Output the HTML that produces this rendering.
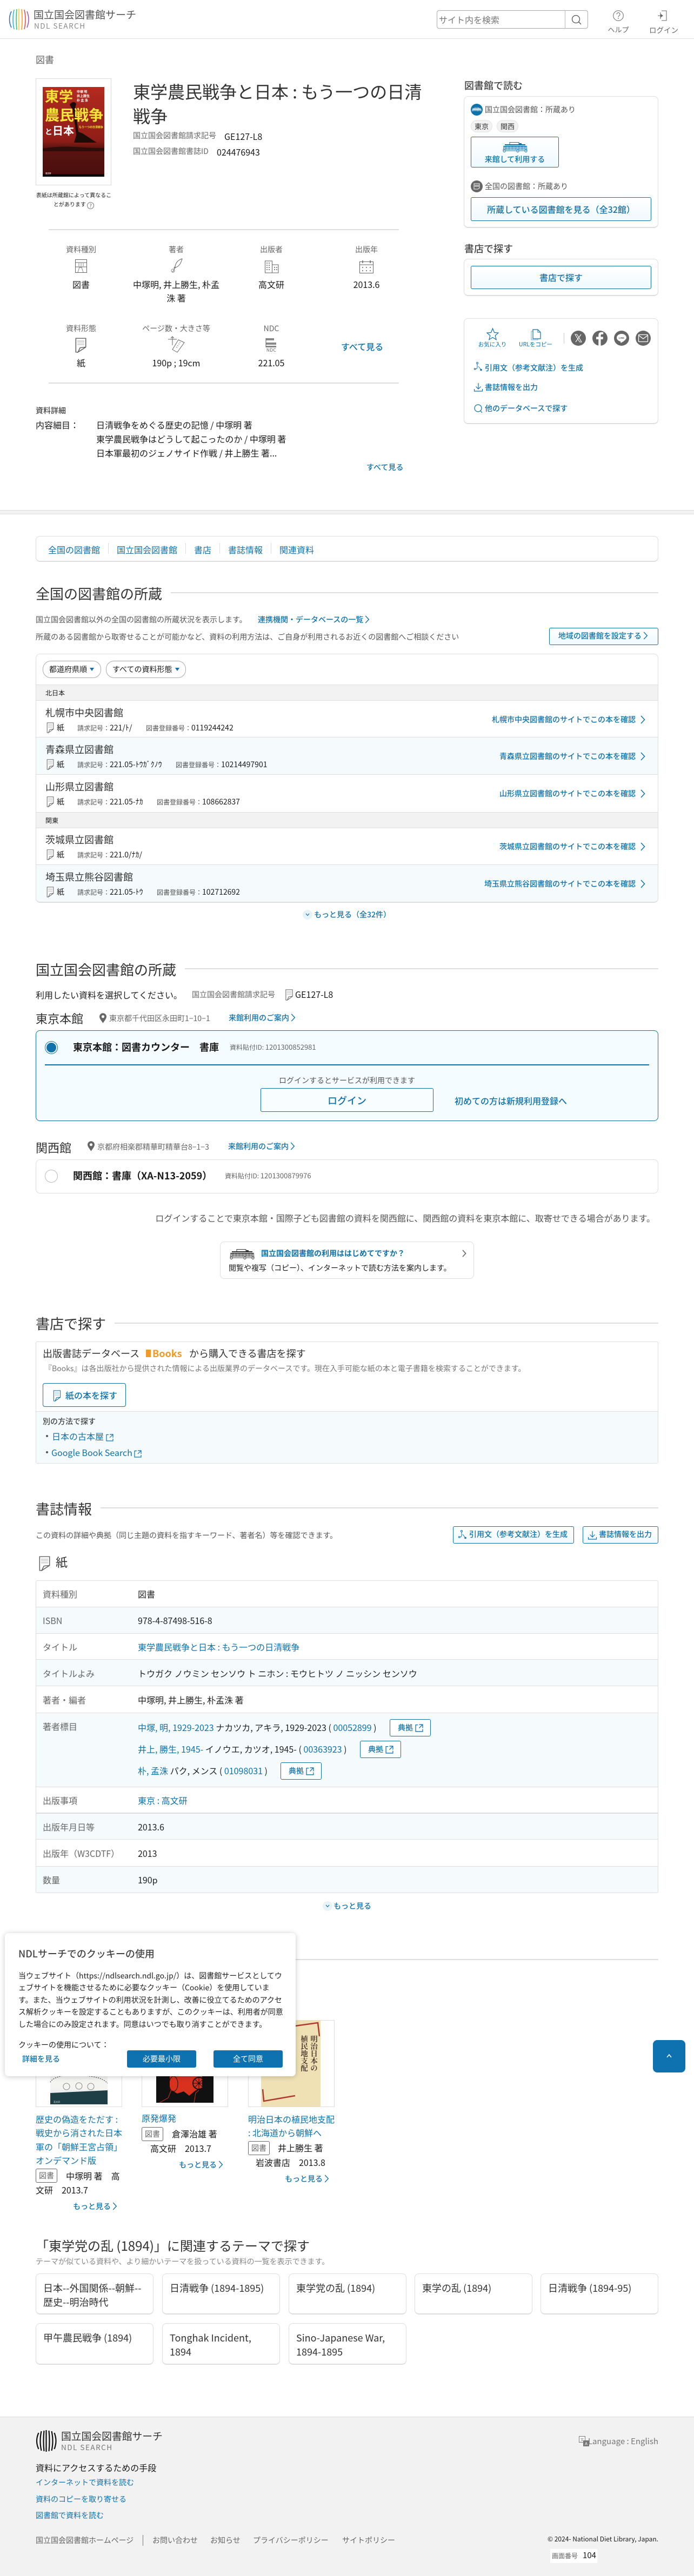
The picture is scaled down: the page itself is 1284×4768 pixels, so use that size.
<!DOCTYPE html>
<html lang="ja"><head><meta charset="utf-8"><title>東学農民戦争と日本</title>
<style>
*{box-sizing:border-box}
html,body{margin:0;padding:0}
body{position:relative;width:1284px;height:4768px;background:#fff;overflow:hidden;font-family:"Noto Sans CJK JP","Liberation Sans",sans-serif;color:#333;font-size:14px}
.t{position:absolute;white-space:nowrap;line-height:20px}
.a{position:absolute}
.l{color:#0f72ab !important}
.g{color:#666}
.k{color:#1a1a1a}
.m{font-weight:500}
.h{position:absolute;font-size:26px;line-height:34px;white-space:nowrap;color:#333;left:66px}
.ln{position:absolute;height:2px;background:#ddd}
.card{position:absolute;border:1px solid #ddd;border-radius:8px;background:#fff;border-bottom-width:2px}
.b{position:absolute;border:1px solid #0f72ab;border-radius:3px;background:linear-gradient(#fff,#eff9fe);color:#0f72ab;text-align:center;font-weight:500}
.row{position:absolute;left:67px;width:1150px;border-bottom:1px solid #ddd}
.sh{background:#f5fbfd}
.reg{position:absolute;left:67px;width:1150px;background:#f2f2f2;border-top:1px solid #ddd;border-bottom:1px solid #ddd}
.tr{position:absolute;left:67px;width:1150px;border-bottom:1px solid #ddd}
.lab{position:absolute;left:79px;font-size:16px;color:#666;line-height:20px;white-space:nowrap}
.val{position:absolute;left:255px;font-size:16px;color:#222;line-height:20px;white-space:nowrap}
.c{text-align:center}
svg{display:block;overflow:visible}
.s{font-size:12px;color:#555}
.tag{position:absolute;border:1px solid #666;border-radius:3px;font-size:14px;text-align:center;line-height:24px;color:#666}
.th{position:absolute;border:1px solid #ddd;border-radius:8px;border-bottom-width:2px;background:#fff;height:76px;width:218px;font-size:18px;line-height:26px;padding:13px 13px;color:#333}
</style></head><body>
<svg width="0" height="0" style="position:absolute">
<symbol id="ch" viewBox="0 0 9 16"><path d="M1 1l6.5 7L1 15" fill="none" stroke="currentColor" stroke-width="1.5"/></symbol>
<symbol id="pp" viewBox="0 0 16 24"><path d="M1 1h14v14L4 23H1z" fill="#fff" stroke="#666" stroke-width="1.2"/><path d="M15 15L4 23l3-7z" fill="#fff" stroke="#666" stroke-width="1.2"/><path d="M3 4h10v4H3zM3 9h10v3H3z" fill="#ddd"/></symbol>
<symbol id="ppb" viewBox="0 0 16 24"><path d="M1 1h14v14L4 23H1z" fill="none" stroke="#0f72ab" stroke-width="1.2"/><path d="M15 15L4 23l3-7z" fill="none" stroke="#0f72ab" stroke-width="1.2"/><path d="M3 4h10v4H3zM3 9h10v3H3z" fill="#cfe4ef"/></symbol>
<symbol id="ex" viewBox="0 0 14 14"><path d="M5 1.500H1v11.500h12V9M7 1h6v6M13 1L7 7" fill="none" stroke="#0f72ab" stroke-width="1.2"/></symbol>
<symbol id="pin" viewBox="0 0 14 20"><path d="M7 0a7 7 0 0 1 7 7c0 4-4 8-7 13C4 15 0 11 0 7a7 7 0 0 1 7-7z" fill="#666"/><circle cx="7" cy="7" r="2.800" fill="#fff"/></symbol>
<symbol id="lib" viewBox="0 0 46 19"><path d="M13 .500h17v4H13z" fill="none" stroke="currentColor"/><path d="M4 4h38v2H4zM30 2h5v2h-5z" fill="currentColor"/><path d="M1 7h44v1H1z" fill="currentColor"/><path d="M3 8h40v6H3z" fill="currentColor" opacity=".75"/><path d="M3 10h40M3 12h40M9 8v6M15 8v6M21 8v6M27 8v6M33 8v6M39 8v6" stroke="#fff" stroke-width=".5"/><path d="M2 8l-1 8M44 8l1 8" stroke="currentColor" fill="none"/><circle cx="3" cy="16.500" r="2" fill="none" stroke="currentColor"/><circle cx="43" cy="16.500" r="2" fill="none" stroke="currentColor"/><circle cx="28" cy="16.500" r="2" fill="none" stroke="currentColor"/><path d="M5 16h21M30 16h11" stroke="currentColor"/></symbol>
</svg>

<!-- HEADER -->
<svg class="a" style="left:16px;top:16px" width="38" height="40" viewBox="0 0 38 40" fill="none" stroke-width="1.600"><path d="M5 5Q-2 20 5 35" stroke="#3b6fc4"/><path d="M10 2Q6 20 10 38" stroke="#2fb6e0"/><path d="M15 1Q13 20 15 39" stroke="#3fbf7a"/><path d="M19 0V40" stroke="#f4d23a"/><path d="M24 1Q26 20 24 39" stroke="#f59b32"/><path d="M29 2Q33 20 29 38" stroke="#e8504a"/><path d="M34 5Q40 20 34 35" stroke="#9a5bb5"/></svg>
<div class="t" style="left:62px;top:17px;font-size:19px;line-height:20px;color:#555">国立国会図書館サーチ</div>
<div class="t" style="left:63px;top:37px;font-size:13.500px;line-height:20px;color:#888;letter-spacing:1.500px">NDL SEARCH</div>
<div class="a" style="left:808px;top:19px;width:280px;height:34px;border:1px solid #aaa;border-radius:4px;background:#fff"></div>
<div class="a" style="left:1045px;top:19px;width:1px;height:34px;background:#bbb"></div>
<div class="t" style="left:812px;top:26px;font-size:16px;color:#777">サイト内を検索</div>
<svg class="a" style="left:1057px;top:27px" width="19" height="19" viewBox="0 0 19 19"><circle cx="8.500" cy="8.500" r="7" fill="none" stroke="#555" stroke-width="1.300"/><path d="M13.500 13.500L18 18" stroke="#555" stroke-width="1.300"/></svg>
<svg class="a" style="left:1134px;top:19px" width="20" height="20" viewBox="0 0 20 20"><circle cx="10" cy="10" r="9.300" fill="none" stroke="#666"/><path d="M7 7.500a3 3 0 1 1 4.500 2.600c-1 .6-1.500 1.200-1.500 2.400" fill="none" stroke="#666"/><circle cx="10" cy="15" r=".9" fill="#666"/></svg>
<div class="t c g" style="left:1114px;top:45px;width:60px;font-size:13px">ヘルプ</div>
<svg class="a" style="left:1216px;top:18px" width="22" height="22" viewBox="0 0 22 22"><path d="M8 2h9v18H8" fill="none" stroke="#666"/><path d="M1 11h6M6 8l4 3-4 3z" fill="#666" stroke="#666"/><path d="M6 5v12" stroke="#666"/></svg>
<div class="t c g" style="left:1198px;top:45px;width:60px;font-size:13.500px">ログイン</div>
<div class="a" style="left:0;top:71px;width:1284px;height:1px;background:#ddd"></div>

<div class="t g" style="left:66px;top:100px;font-size:17px">図書</div>

<!-- BOOK -->
<div class="a" style="left:66px;top:145px;width:140px;height:198px;border:1px solid #ddd"></div>
<svg class="a" style="left:79px;top:161px" width="114" height="166" viewBox="0 0 114 166">
<defs><linearGradient id="rd" x1="0" y1="0" x2="0" y2="1"><stop offset="0" stop-color="#b32b20"/><stop offset=".6" stop-color="#8f1e17"/><stop offset=".68" stop-color="#5c1410"/><stop offset=".97" stop-color="#4a0f0d"/><stop offset=".98" stop-color="#000"/></linearGradient></defs>
<rect width="114" height="166" fill="url(#rd)"/>
<path d="M50 32q8-8 12-1l-2 8 6 44 8 3 26 17H58l4-14-6-46-5-8z" fill="#1d0b08"/>
<path d="M0 114q30-5 60-3t54 2v6H0z" fill="#2d0d0a"/>
<g font-family="'Noto Sans CJK JP',sans-serif" font-weight="700">
<text x="4" y="27" font-size="26" fill="#f3e53a">東学</text>
<text x="4" y="62" font-size="27" fill="#f3e53a">農民戦争</text>
<text x="4" y="88" font-size="14" fill="#fff">と</text><text x="18" y="88" font-size="20" fill="#fff">日本</text>
<text x="63" y="11" font-size="6" fill="#fff">中塚 明</text><text x="63" y="19" font-size="6" fill="#fff">井上勝生</text><text x="63" y="27" font-size="6" fill="#fff">朴 孟 洙</text>
<text x="67" y="76" font-size="5" fill="#f3e53a">もう一つの日清戦争</text>
<text x="5" y="161" font-size="3.500" fill="#ddd">高文研</text></g>
</svg>
<div class="t c k" style="left:66px;top:351px;width:141px;font-size:10px">表紙は所蔵館によって異なるこ</div>
<div class="t c k" style="left:66px;top:368px;width:141px;font-size:10px">とがあります <span style="display:inline-block;width:13px;height:13px;border:1px solid #777;border-radius:50%;font-size:9px;line-height:11px;color:#666;vertical-align:-2px">?</span></div>

<div class="t" style="left:246px;top:147px;font-size:32px;line-height:45px;color:#333">東学農民戦争と日本 : もう一つの日清<br>戦争</div>
<div class="t g" style="left:246px;top:241px">国立国会図書館請求記号</div>
<div class="t k" style="left:415px;top:242px;font-size:16px">GE127-L8</div>
<div class="t g" style="left:246px;top:270px">国立国会図書館書誌ID</div>
<div class="t k" style="left:401px;top:271px;font-size:16px">024476943</div>
<div class="ln" style="left:90px;top:424px;width:648px"></div>

<!-- GRID -->
<div class="t c g" style="left:62px;top:452px;width:176px">資料種別</div>
<div class="t c g" style="left:238px;top:452px;width:176px">著者</div>
<div class="t c g" style="left:414px;top:452px;width:176px">出版者</div>
<div class="t c g" style="left:590px;top:452px;width:176px">出版年</div>
<svg class="a" style="left:139px;top:480px" width="22" height="25" viewBox="0 0 22 25"><path d="M.5.500h21v24H.5zM.5 6h21M.5 14h21" fill="none" stroke="#666"/><path d="M7 13V7M11 13V7M15 13V7M5 24l3-9h4l3 9" fill="none" stroke="#888"/></svg>
<svg class="a" style="left:315px;top:478px" width="24" height="27" viewBox="0 0 24 27"><path d="M22 1c-8 2-12 8-13 14l-2 3 3-1c7-2 10-9 12-16zM10 16L4 26" fill="none" stroke="#666"/><circle cx="5" cy="23" r="3" fill="none" stroke="#888"/></svg>
<svg class="a" style="left:490px;top:482px" width="26" height="24" viewBox="0 0 26 24"><path d="M.5 23V1h13v22M13.500 8H25v15H0" fill="none" stroke="#666"/><path d="M3 4h2v2H3zM7 4h2v2H7zM3 8h2v2H3zM7 8h2v2H7zM3 12h2v2H3zM7 12h2v2H7zM3 16h2v2H3zM7 16h2v2H7zM17 12h2v2h-2zM21 12h2v2h-2zM17 16h2v2h-2zM21 16h2v2h-2z" fill="#888"/></svg>
<svg class="a" style="left:665px;top:481px" width="26" height="25" viewBox="0 0 26 25"><path d="M.5 3.500h25v21H.5zM.5 9h25" fill="none" stroke="#666"/><path d="M6 1v5M20 1v5" stroke="#666" stroke-width="1.500"/><path d="M5 13h2v2H5zM12 13h2v2h-2zM19 13h2v2h-2zM5 19h2v2H5zM12 19h2v2h-2zM19 19h2v2h-2z" fill="#888"/></svg>
<div class="t c k" style="left:62px;top:514px;width:176px;font-size:16px;line-height:25px">図書</div>
<div class="t c k" style="left:238px;top:514px;width:176px;font-size:16px;line-height:25px">中塚明, 井上勝生, 朴孟<br>洙 著</div>
<div class="t c k" style="left:414px;top:514px;width:176px;font-size:16px;line-height:25px">高文研</div>
<div class="t c k" style="left:590px;top:514px;width:176px;font-size:16px;line-height:25px">2013.6</div>

<div class="t c g" style="left:62px;top:598px;width:176px">資料形態</div>
<div class="t c g" style="left:238px;top:598px;width:176px">ページ数・大きさ等</div>
<div class="t c g" style="left:414px;top:598px;width:176px">NDC</div>
<svg class="a" style="left:139px;top:625px" width="21" height="28" viewBox="0 0 16 24" preserveAspectRatio="none"><use href="#pp"/></svg>
<svg class="a" style="left:310px;top:623px" width="32" height="30" viewBox="0 0 32 30"><path d="M20 6l11 5-13 18-9-5z" fill="none" stroke="#666"/><path d="M22 10l2 1.500M20 13l2 1.500M18 16l2 1.500M16 19l2 1.500" stroke="#888"/><path d="M9 0v16M6 3l3-3 3 3M1 5h16" fill="none" stroke="#666"/></svg>
<svg class="a" style="left:491px;top:625px" width="20" height="28" viewBox="0 0 20 28"><path d="M1 1h15v4H1zM1 9h19v4H1zM1 15h19v3H1z" fill="#888"/><path d="M1 1v17" stroke="#666"/></svg>
<div class="t c g" style="left:414px;top:638px;width:176px;font-size:8.500px;letter-spacing:.3px">NDC</div>
<div class="t c k" style="left:62px;top:661px;width:176px;font-size:16px">紙</div>
<div class="t c k" style="left:238px;top:661px;width:176px;font-size:16px">190p ; 19cm</div>
<div class="t c k" style="left:414px;top:661px;width:176px;font-size:16px">221.05</div>
<div class="t l m" style="left:631px;top:631px;font-size:16px">すべて見る</div>
<div class="ln" style="left:90px;top:708px;width:648px"></div>

<div class="t m" style="left:66px;top:750px;color:#444">資料詳細</div>
<div class="t k" style="left:66px;top:776px;font-size:16px">内容細目：</div>
<div class="t k" style="left:178px;top:773px;font-size:16px;line-height:26px">日清戦争をめぐる歴史の記憶 / 中塚明 著<br>東学農民戦争はどうして起こったのか / 中塚明 著<br>日本軍最初のジェノサイド作戦 / 井上勝生 著...</div>
<div class="t l m" style="left:678px;top:855px">すべて見る</div>

<div class="a" style="left:0;top:944px;width:1284px;height:8px;background:#f2f2f2;border-top:1px solid #ddd;border-bottom:1px solid #ddd"></div>

<!-- RIGHT COLUMN -->
<div class="t m" style="left:859px;top:148px;font-size:18px;color:#444">図書館で読む</div>
<div class="card" style="left:858px;top:178px;width:360px;height:244px"></div>
<div class="a" style="left:871px;top:192px;width:22px;height:22px;border-radius:50%;background:#0f72ab;color:#fff"><svg style="margin:6px 2px" width="18" height="9"><use href="#lib"/></svg></div>
<div class="t" style="left:897px;top:193px;color:#555">国立国会図書館：所蔵あり</div>
<div class="a c" style="left:871px;top:222px;width:40px;height:23px;border-radius:12px;background:#f2f2f2;border:1px solid #e4e4e4;font-size:13px;line-height:21px">東京</div>
<div class="a c" style="left:919px;top:222px;width:40px;height:23px;border-radius:12px;background:#f2f2f2;border:1px solid #e4e4e4;font-size:13px;line-height:21px">関西</div>
<div class="b" style="left:871px;top:253px;width:163px;height:57px"></div>
<svg class="a" style="left:930px;top:263px;color:#0f72ab" width="46" height="19"><use href="#lib"/></svg>
<div class="t c l m" style="left:871px;top:285px;width:163px">来館して利用する</div>
<div class="a" style="left:871px;top:334px;width:22px;height:22px;border-radius:50%;background:#666;color:#fff"><svg style="margin:5px 5px" width="12" height="12" viewBox="0 0 12 12"><path d="M1 1h10v8l-3 2H1zM2 4h8M2 6h8" fill="none" stroke="#fff"/></svg></div>
<div class="t" style="left:897px;top:335px;color:#555">全国の図書館：所蔵あり</div>
<div class="b" style="left:871px;top:365px;width:334px;height:44px;font-size:16px;line-height:42px">所蔵している図書館を見る（全32館）</div>

<div class="t m" style="left:859px;top:450px;font-size:18px;color:#444">書店で探す</div>
<div class="card" style="left:858px;top:479px;width:360px;height:69px"></div>
<div class="b" style="left:871px;top:492px;width:334px;height:43px;font-size:16px;line-height:41px">書店で探す</div>

<div class="card" style="left:858px;top:589px;width:360px;height:196px"></div>
<svg class="a" style="left:900px;top:607px" width="23" height="23" viewBox="0 0 23 23"><path d="M11.500 1l3 7.500 7.500.6-5.800 5 1.900 7.500-6.600-4-6.600 4 1.900-7.500L1 9.100l7.500-.6z" fill="none" stroke="#0f72ab" stroke-width="1.200"/></svg>
<div class="t c l" style="left:871px;top:628px;width:80px;font-size:10.500px">お気に入り</div>
<svg class="a" style="left:982px;top:609px" width="19" height="21" viewBox="0 0 19 21"><path d="M4 1h9l5 5v12H4z" fill="#fff" stroke="#0f72ab" stroke-width="1.200"/><path d="M13 1v5h5" fill="none" stroke="#0f72ab"/><path d="M4 4H1v16h12v-2" fill="none" stroke="#0f72ab" opacity=".6"/></svg>
<div class="t c l" style="left:951px;top:628px;width:80px;font-size:10.500px">URLをコピー</div>
<div class="a" style="left:1043px;top:616px;width:1px;height:20px;background:#ccc"></div>
<svg class="a" style="left:1056px;top:612px" width="28" height="28" viewBox="0 0 28 28"><circle cx="14" cy="14" r="14" fill="#666"/><path d="M8 7h3.500L20 21h-3.500zM19 7l-10 14" fill="none" stroke="#fff" stroke-width="1.100"/></svg>
<svg class="a" style="left:1096px;top:612px" width="28" height="28" viewBox="0 0 28 28"><circle cx="14" cy="14" r="14" fill="#666"/><path d="M15.500 28V16h4l.6-4.500h-4.600V9c0-1.300.5-2.200 2.300-2.200h2.400V3c-.6-.1-1.900-.2-3.300-.2-3.400 0-5.600 2-5.600 5.700v3H7v4.500h4.300v12z" fill="#fff"/></svg>
<svg class="a" style="left:1136px;top:612px" width="28" height="28" viewBox="0 0 28 28"><circle cx="14" cy="14" r="14" fill="#666"/><path d="M14 6c-5 0-9 3-9 7 0 3.500 3 6.300 7 7 .5.200.3 1.500.2 2-.1.500.4.700 1 .4 2-1 7-4 8.500-6.500.9-1 1.300-1.900 1.300-2.900 0-4-4-7-9-7z" fill="#fff"/><text x="14" y="15" font-size="4.500" font-weight="700" text-anchor="middle" fill="#666" font-family="'Liberation Sans',sans-serif">LINE</text></svg>
<svg class="a" style="left:1176px;top:612px" width="28" height="28" viewBox="0 0 28 28"><circle cx="14" cy="14" r="14" fill="#666"/><rect x="5.500" y="7.500" width="17" height="13" rx="1" fill="none" stroke="#fff" stroke-width="1.300"/><path d="M6 9l8 6 8-6" fill="none" stroke="#fff" stroke-width="1.300"/></svg>
<svg class="a" style="left:877px;top:669px" width="16" height="20" viewBox="0 0 16 20"><circle cx="6" cy="3" r="1.500" fill="none" stroke="#0f72ab"/><path d="M6 5v6a3 3 0 0 1-3 3H2" fill="none" stroke="#0f72ab"/><circle cx="1.500" cy="14" r="1.200" fill="none" stroke="#0f72ab"/><path d="M8 9l4 5" stroke="#0f72ab"/><circle cx="13" cy="15.500" r="1.800" fill="#0f72ab"/></svg>
<div class="t l m" style="left:897px;top:671px">引用文（参考文献注）を生成</div>
<svg class="a" style="left:877px;top:708px" width="16" height="17" viewBox="0 0 16 17"><path d="M8 1v11M3.500 7.500L8 12l4.500-4.500M.5 12v4h15v-4" fill="none" stroke="#0f72ab" stroke-width="1.200"/></svg>
<div class="t l m" style="left:897px;top:707px">書誌情報を出力</div>
<svg class="a" style="left:877px;top:748px" width="16" height="17" viewBox="0 0 16 17"><circle cx="7.500" cy="7.500" r="6.500" fill="none" stroke="#0f72ab" stroke-width="1.200"/><path d="M12 12.500l3 3.500" stroke="#0f72ab" stroke-width="1.200"/></svg>
<div class="t l m" style="left:897px;top:746px">他のデータベースで探す</div>

<!-- NAV CARD -->
<div class="card" style="left:66px;top:992px;width:1152px;height:48px"></div>
<div class="t l" style="left:89px;top:1007px;font-size:16px">全国の図書館</div>
<div class="a" style="left:200px;top:1005px;width:1px;height:20px;background:#ddd"></div>
<div class="t l" style="left:216px;top:1007px;font-size:16px">国立国会図書館</div>
<div class="a" style="left:343px;top:1005px;width:1px;height:20px;background:#ddd"></div>
<div class="t l" style="left:359px;top:1007px;font-size:16px">書店</div>
<div class="a" style="left:406px;top:1005px;width:1px;height:20px;background:#ddd"></div>
<div class="t l" style="left:422px;top:1007px;font-size:16px">書誌情報</div>
<div class="a" style="left:501px;top:1005px;width:1px;height:20px;background:#ddd"></div>
<div class="t l" style="left:517px;top:1007px;font-size:16px">関連資料</div>

<!-- 全国 -->
<div class="h" style="top:1082px">全国の図書館の所蔵</div>
<div class="ln" style="left:316px;top:1096px;width:902px"></div>
<div class="t" style="left:66px;top:1137px;color:#555">国立国会図書館以外の全国の図書館の所蔵状況を表示します。</div>
<div class="t l m" style="left:477px;top:1137px">連携機関・データベースの一覧 <svg style="display:inline;vertical-align:-2px" width="9" height="15"><use href="#ch"/></svg></div>
<div class="t" style="left:66px;top:1169px;color:#555">所蔵のある図書館から取寄せることが可能かなど、資料の利用方法は、ご自身が利用されるお近くの図書館へご相談ください</div>
<div class="b" style="left:1016px;top:1162px;width:202px;height:32px;line-height:28px;font-size:14px;padding-right:2px">地域の図書館を設定する <svg style="display:inline;vertical-align:-2px" width="9" height="15"><use href="#ch"/></svg></div>

<div class="card" style="left:66px;top:1210px;width:1152px;height:461px"></div>
<div class="a" style="left:79px;top:1223px;width:108px;height:32px;border:1px solid #aaa;border-radius:15px"></div>
<div class="t k" style="left:91px;top:1229px">都道府県順</div><div class="a" style="left:166px;top:1236px;border:4px solid transparent;border-top:6px solid #0f72ab;border-bottom:0"></div>
<div class="a" style="left:196px;top:1223px;width:148px;height:32px;border:1px solid #aaa;border-radius:15px"></div>
<div class="t k" style="left:208px;top:1229px">すべての資料形態</div><div class="a" style="left:324px;top:1236px;border:4px solid transparent;border-top:6px solid #0f72ab;border-bottom:0"></div>

<div class="reg" style="top:1267px;height:30px"></div><div class="t k" style="left:84px;top:1273px;font-size:12px">北日本</div>
<div class="row" style="top:1297px;height:68px"></div>
<div class="t" style="left:84px;top:1309px;font-size:18px">札幌市中央図書館</div>
<svg class="a" style="left:86px;top:1337px" width="14" height="20"><use href="#pp"/></svg><div class="t k" style="left:105px;top:1337px">紙</div>
<div class="t s" style="left:143px;top:1337px">請求記号：<span class="k" style="font-size:14px">221/ﾄ/</span></div>
<div class="t s" style="left:270px;top:1337px">図書登録番号：<span class="k" style="font-size:14px">0119244242</span></div>
<div class="t l m" style="right:108px;top:1322px">札幌市中央図書館のサイトでこの本を確認</div><svg class="a l" style="left:1185px;top:1324px" width="9" height="16"><use href="#ch"/></svg>

<div class="row sh" style="top:1365px;height:69px"></div>
<div class="t" style="left:84px;top:1377px;font-size:18px">青森県立図書館</div>
<svg class="a" style="left:86px;top:1405px" width="14" height="20"><use href="#pp"/></svg><div class="t k" style="left:105px;top:1405px">紙</div>
<div class="t s" style="left:143px;top:1405px">請求記号：<span class="k" style="font-size:14px">221.05-ﾄｳｶﾞｸﾉｳ</span></div>
<div class="t s" style="left:325px;top:1405px">図書登録番号：<span class="k" style="font-size:14px">10214497901</span></div>
<div class="t l m" style="right:108px;top:1390px">青森県立図書館のサイトでこの本を確認</div><svg class="a l" style="left:1185px;top:1392px" width="9" height="16"><use href="#ch"/></svg>

<div class="row" style="top:1434px;height:70px"></div>
<div class="t" style="left:84px;top:1446px;font-size:18px">山形県立図書館</div>
<svg class="a" style="left:86px;top:1474px" width="14" height="20"><use href="#pp"/></svg><div class="t k" style="left:105px;top:1474px">紙</div>
<div class="t s" style="left:143px;top:1474px">請求記号：<span class="k" style="font-size:14px">221.05-ﾅｶ</span></div>
<div class="t s" style="left:290px;top:1474px">図書登録番号：<span class="k" style="font-size:14px">108662837</span></div>
<div class="t l m" style="right:108px;top:1459px">山形県立図書館のサイトでこの本を確認</div><svg class="a l" style="left:1185px;top:1461px" width="9" height="16"><use href="#ch"/></svg>

<div class="reg" style="top:1503px;height:30px"></div><div class="t k" style="left:84px;top:1509px;font-size:12px">関東</div>
<div class="row" style="top:1533px;height:68px"></div>
<div class="t" style="left:84px;top:1544px;font-size:18px">茨城県立図書館</div>
<svg class="a" style="left:86px;top:1572px" width="14" height="20"><use href="#pp"/></svg><div class="t k" style="left:105px;top:1572px">紙</div>
<div class="t s" style="left:143px;top:1572px">請求記号：<span class="k" style="font-size:14px">221.0/ﾅｶ/</span></div>
<div class="t l m" style="right:108px;top:1557px">茨城県立図書館のサイトでこの本を確認</div><svg class="a l" style="left:1185px;top:1559px" width="9" height="16"><use href="#ch"/></svg>

<div class="a sh" style="left:67px;top:1601px;width:1150px;height:68px;border-radius:0 0 8px 8px"></div>
<div class="t" style="left:84px;top:1613px;font-size:18px">埼玉県立熊谷図書館</div>
<svg class="a" style="left:86px;top:1641px" width="14" height="20"><use href="#pp"/></svg><div class="t k" style="left:105px;top:1641px">紙</div>
<div class="t s" style="left:143px;top:1641px">請求記号：<span class="k" style="font-size:14px">221.05-ﾄｳ</span></div>
<div class="t s" style="left:290px;top:1641px">図書登録番号：<span class="k" style="font-size:14px">102712692</span></div>
<div class="t l m" style="right:108px;top:1626px">埼玉県立熊谷図書館のサイトでこの本を確認</div><svg class="a l" style="left:1185px;top:1628px" width="9" height="16"><use href="#ch"/></svg>

<div class="a c l" style="left:560px;top:1684px;width:18px;height:18px;border-radius:50%;background:#e8f3f8;line-height:16px"><svg style="margin:6px 5px" width="8" height="6" viewBox="0 0 8 6"><path d="M1 1l3 3.500L7 1" fill="none" stroke="#0f72ab" stroke-width="1.200"/></svg></div>
<div class="t l m" style="left:581px;top:1683px">もっと見る（全32件）</div>

<!-- 国立 -->
<div class="h" style="top:1778px">国立国会図書館の所蔵</div>
<div class="ln" style="left:342px;top:1792px;width:876px"></div>
<div class="t k" style="left:66px;top:1831px;font-size:16px">利用したい資料を選択してください。</div>
<div class="t g" style="left:355px;top:1831px">国立国会図書館請求記号</div>
<svg class="a" style="left:528px;top:1831px" width="14" height="21"><use href="#pp"/></svg>
<div class="t k" style="left:546px;top:1830px;font-size:16px">GE127-L8</div>

<div class="t" style="left:66px;top:1875px;font-size:22px">東京本館</div>
<svg class="a" style="left:184px;top:1875px" width="13" height="19"><use href="#pin"/></svg>
<div class="t g" style="left:202px;top:1875px">東京都千代田区永田町1−10−1</div>
<div class="t l m" style="left:423px;top:1874px">来館利用のご案内 <svg style="display:inline;vertical-align:-2px" width="9" height="15"><use href="#ch"/></svg></div>

<div class="a" style="left:66px;top:1907px;width:1152px;height:168px;border:1px solid #0f72ab;border-radius:8px;background:#f5fcff"></div>
<div class="a" style="left:83px;top:1927px;width:24px;height:24px;border-radius:50%;border:1px solid #0f72ab;background:#fff"></div>
<div class="a" style="left:86px;top:1930px;width:18px;height:18px;border-radius:50%;background:#0f72ab"></div>
<div class="t k" style="left:135px;top:1928px;font-size:18px;font-weight:700">東京本館：図書カウンター　書庫</div>
<div class="t g" style="left:425px;top:1928px;font-size:12px">資料貼付ID: <span style="font-size:13px">1201300852981</span></div>
<div class="a" style="left:83px;top:1970px;width:1118px;height:2px;background:#0f72ab"></div>
<div class="t" style="left:516px;top:1990px;color:#555">ログインするとサービスが利用できます</div>
<div class="a l c m" style="left:482px;top:2014px;width:320px;height:44px;border:1px solid #0f72ab;border-radius:3px;font-size:18px;line-height:44px;background:#f8fdff">ログイン</div>
<div class="t l m" style="left:841px;top:2027px;font-size:16px">初めての方は新規利用登録へ</div>

<div class="t" style="left:66px;top:2114px;font-size:22px">関西館</div>
<svg class="a" style="left:162px;top:2112px" width="13" height="19"><use href="#pin"/></svg>
<div class="t g" style="left:180px;top:2113px">京都府相楽郡精華町精華台8−1−3</div>
<div class="t l m" style="left:422px;top:2112px">来館利用のご案内 <svg style="display:inline;vertical-align:-2px" width="9" height="15"><use href="#ch"/></svg></div>
<div class="a" style="left:66px;top:2146px;width:1152px;height:63px;border:1px solid #ddd;border-radius:8px"></div>
<div class="a" style="left:83px;top:2165px;width:24px;height:24px;border-radius:50%;border:1px solid #bbb"></div>
<div class="t k" style="left:135px;top:2166px;font-size:18px;font-weight:700">関西館：書庫（XA-N13-2059）</div>
<div class="t g" style="left:416px;top:2166px;font-size:12px">資料貼付ID: <span style="font-size:13px">1201300879976</span></div>
<div class="t" style="right:72px;top:2244px;font-size:16px;color:#555">ログインすることで東京本館・国際子ども図書館の資料を関西館に、関西館の資料を東京本館に、取寄せできる場合があります。</div>

<div class="a" style="left:407px;top:2298px;width:470px;height:69px;border:1px solid #ddd;border-radius:8px"></div>
<svg class="a" style="left:425px;top:2312px;color:#333" width="46" height="19"><use href="#lib"/></svg>
<div class="t l" style="left:483px;top:2310px;font-weight:700">国立国会図書館の利用ははじめてですか？</div>
<svg class="a" style="left:855px;top:2313px;color:#555" width="8" height="14"><use href="#ch"/></svg>
<div class="t k" style="left:423px;top:2337px">閲覧や複写（コピー）、インターネットで読む方法を案内します。</div>

<!-- 書店 -->
<div class="h" style="top:2433px">書店で探す</div>
<div class="ln" style="left:212px;top:2448px;width:1006px"></div>
<div class="a" style="left:66px;top:2483px;width:1152px;height:226px;border:1px solid #ddd;border-radius:3px"></div>
<div class="a sh" style="left:67px;top:2612px;width:1150px;height:96px;border-top:1px solid #ddd"></div>
<div class="t" style="left:79px;top:2495px;font-size:18px">出版書誌データベース</div>
<div class="a" style="left:270px;top:2498px;width:9px;height:14px;background:#f19a26"></div>
<div class="t" style="left:282px;top:2495px;font-size:18px;font-weight:700;color:#f19a26">Books</div>
<div class="t" style="left:350px;top:2495px;font-size:18px">から購入できる書店を探す</div>
<div class="t" style="left:82px;top:2523px;color:#777">『Books』は各出版社から提供された情報による出版業界のデータベースです。現在入手可能な紙の本と電子書籍を検索することができます。</div>
<div class="b" style="left:79px;top:2560px;width:154px;height:44px;background:linear-gradient(#fff,#f8fcfe);border-radius:4px"></div>
<svg class="a" style="left:98px;top:2573px" width="15" height="21"><use href="#ppb"/></svg>
<div class="t l m" style="left:121px;top:2572px;font-size:16px">紙の本を探す</div>
<div class="t m" style="left:79px;top:2621px;color:#444">別の方法で探す</div>
<div class="a" style="left:85px;top:2656px;width:4px;height:4px;border-radius:50%;background:#555"></div>
<div class="t l" style="left:96px;top:2648px;font-size:16px">日本の古本屋 <svg style="display:inline;vertical-align:-3px" width="14" height="14"><use href="#ex"/></svg></div>
<div class="a" style="left:85px;top:2686px;width:4px;height:4px;border-radius:50%;background:#555"></div>
<div class="t l" style="left:95px;top:2678px;font-size:16px">Google Book Search <svg style="display:inline;vertical-align:-3px" width="14" height="14"><use href="#ex"/></svg></div>

<!-- 書誌情報 -->
<div class="h" style="top:2776px">書誌情報</div>
<div class="ln" style="left:186px;top:2790px;width:1032px"></div>
<div class="t" style="left:66px;top:2832px;color:#555">この資料の詳細や典拠（同じ主題の資料を指すキーワード、著者名）等を確認できます。</div>
<div class="b" style="left:838px;top:2825px;width:224px;height:32px;line-height:28px;padding-left:18px">引用文（参考文献注）を生成</div>
<svg class="a" style="left:848px;top:2831px" width="16" height="20" viewBox="0 0 16 20"><circle cx="6" cy="3" r="1.500" fill="none" stroke="#0f72ab"/><path d="M6 5v6a3 3 0 0 1-3 3H2" fill="none" stroke="#0f72ab"/><circle cx="1.500" cy="14" r="1.200" fill="none" stroke="#0f72ab"/><path d="M8 9l4 5" stroke="#0f72ab"/><circle cx="13" cy="15.500" r="1.800" fill="#0f72ab"/></svg>
<div class="b" style="left:1078px;top:2825px;width:140px;height:32px;line-height:28px;padding-left:18px">書誌情報を出力</div>
<svg class="a" style="left:1088px;top:2833px" width="16" height="17" viewBox="0 0 16 17"><path d="M8 1v11M3.500 7.500L8 12l4.500-4.500M.5 12v4h15v-4" fill="none" stroke="#0f72ab" stroke-width="1.200"/></svg>
<svg class="a" style="left:72px;top:2880px" width="21" height="28" preserveAspectRatio="none" viewBox="0 0 16 24"><use href="#pp"/></svg>
<div class="t" style="left:103px;top:2881px;font-size:22px">紙</div>

<div class="a" style="left:66px;top:2925px;width:1152px;height:579px;border:1px solid #ddd;border-bottom-width:2px;border-radius:3px"></div>
<div class="tr" style="top:2926px;height:49px"></div><div class="lab" style="top:2940px">資料種別</div><div class="val" style="top:2940px">図書</div>
<div class="tr sh" style="top:2975px;height:49px"></div><div class="lab" style="top:2989px">ISBN</div><div class="val" style="top:2989px">978-4-87498-516-8</div>
<div class="tr" style="top:3024px;height:48px"></div><div class="lab" style="top:3038px">タイトル</div><div class="val l" style="top:3038px">東学農民戦争と日本 : もう一つの日清戦争</div>
<div class="tr sh" style="top:3072px;height:49px"></div><div class="lab" style="top:3087px">タイトルよみ</div><div class="val" style="top:3087px">トウガク ノウミン センソウ ト ニホン : モウヒトツ ノ ニッシン センソウ</div>
<div class="tr" style="top:3121px;height:50px"></div><div class="lab" style="top:3136px">著者・編者</div><div class="val" style="top:3136px">中塚明, 井上勝生, 朴孟洙 著</div>
<div class="tr sh" style="top:3171px;height:137px"></div><div class="lab" style="top:3185px">著者標目</div>
<div class="val" style="top:3187px"><span class="l">中塚, 明, 1929-2023</span> ナカツカ, アキラ, 1929-2023 ( <span class="l">00052899</span> )</div>
<div class="val" style="top:3227px"><span class="l">井上, 勝生, 1945-</span> イノウエ, カツオ, 1945- ( <span class="l">00363923</span> )</div>
<div class="val" style="top:3267px"><span class="l">朴, 孟洙</span> パク, メンス ( <span class="l">01098031</span> )</div>
<div class="b" style="left:721px;top:3182px;width:76px;height:32px;line-height:30px;background:#fff;padding-right:18px">典拠</div><svg class="a" style="left:768px;top:3191px" width="15" height="15"><use href="#ex"/></svg>
<div class="b" style="left:666px;top:3222px;width:76px;height:32px;line-height:30px;background:#fff;padding-right:18px">典拠</div><svg class="a" style="left:713px;top:3231px" width="15" height="15"><use href="#ex"/></svg>
<div class="b" style="left:519px;top:3262px;width:76px;height:32px;line-height:30px;background:#fff;padding-right:18px">典拠</div><svg class="a" style="left:566px;top:3271px" width="15" height="15"><use href="#ex"/></svg>
<div class="tr" style="top:3308px;height:49px;border-bottom-width:2px"></div><div class="lab" style="top:3322px">出版事項</div><div class="val l" style="top:3322px">東京 : 高文研</div>
<div class="tr sh" style="top:3357px;height:48px"></div><div class="lab" style="top:3371px">出版年月日等</div><div class="val" style="top:3371px">2013.6</div>
<div class="tr" style="top:3405px;height:50px"></div><div class="lab" style="top:3420px">出版年（W3CDTF）</div><div class="val" style="top:3420px">2013</div>
<div class="tr sh" style="top:3455px;height:48px;border:0"></div><div class="lab" style="top:3469px">数量</div><div class="val" style="top:3469px">190p</div>
<div class="a" style="left:597px;top:3519px;width:18px;height:18px;border-radius:50%;background:#e8f3f8"><svg style="margin:6px 5px" width="8" height="6" viewBox="0 0 8 6"><path d="M1 1l3 3.500L7 1" fill="none" stroke="#0f72ab" stroke-width="1.200"/></svg></div>
<div class="t l m" style="left:617px;top:3518px">もっと見る</div>

<!-- 関連 -->
<div class="h" style="top:3610px">関連資料</div>
<div class="ln" style="left:186px;top:3626px;width:1032px"></div>
<div class="a" style="left:66px;top:3739px;width:160px;height:161px;border:1px solid #ddd"></div>
<div class="a" style="left:262px;top:3739px;width:160px;height:161px;border:1px solid #ddd"></div>
<div class="a" style="left:459px;top:3739px;width:160px;height:161px;border:1px solid #ddd"></div>
<svg class="a" style="left:93px;top:3739px" width="106" height="156" viewBox="0 0 106 156"><rect width="106" height="156" fill="#f4f4f0"/><path d="M0 115Q5 106 25 103T80 105q18 3 26 12" fill="none" stroke="#333" stroke-dasharray="2 2"/><path d="M0 146q40-14 106-15v-2H0z" fill="#eee"/><circle cx="30" cy="123" r="6" fill="none" stroke="#888"/><circle cx="53" cy="122" r="6" fill="none" stroke="#888"/><circle cx="75" cy="123" r="6" fill="none" stroke="#888"/><path d="M0 135l106-5v26H0z" fill="#1f3f47"/><text x="6" y="153" font-size="4" fill="#ddd">高文研</text></svg>
<svg class="a" style="left:289px;top:3739px" width="106" height="153" viewBox="0 0 106 153"><rect width="106" height="153" fill="#111"/><path d="M25 95h60v30l-12 5-12 10-10-8-12 4-14-8z" fill="#d8321f"/><circle cx="79" cy="117" r="11" fill="none" stroke="#111" stroke-width="2"/><path d="M79 106v22M68 117h22M71 109l16 16M87 109l-16 16" stroke="#111"/><ellipse cx="32" cy="118" rx="8" ry="14" fill="none" stroke="#111"/><path d="M6 153l16-9 6-15M70 153l3-18 6-5" stroke="#d8321f" fill="none"/></svg>
<svg class="a" style="left:483px;top:3739px" width="110" height="160" viewBox="0 0 110 160"><rect width="110" height="160" fill="#f0e1b4"/><path d="M55 12l50-7 3 25" fill="none" stroke="#ad3a32" stroke-width="2.500"/><path d="M3 128l2 22 58-10" fill="none" stroke="#ad3a32" stroke-width="2.500"/><text x="98" y="28" font-size="13.500" fill="#4a3a30" style="writing-mode:vertical-rl" font-family="'Noto Serif CJK SC',serif" font-weight="700">明治日本の</text><text x="80" y="28" font-size="13.500" fill="#4a3a30" style="writing-mode:vertical-rl" font-family="'Noto Serif CJK SC',serif" font-weight="700">植民地支配</text></svg>

<div class="t l" style="left:66px;top:3910px;font-size:16px;line-height:25.300px">歴史の偽造をただす :<br>戦史から消された日本<br>軍の「朝鮮王宮占領」<br>オンデマンド版</div>
<div class="tag" style="left:66px;top:4014px;width:40px;height:26px">図書</div>
<div class="t k" style="left:122px;top:4017px;font-size:16px">中塚明 著　高</div>
<div class="t k" style="left:66px;top:4043px;font-size:16px">文研　2013.7</div>
<div class="t l m" style="left:135px;top:4074px">もっと見る <svg style="display:inline;vertical-align:-2px" width="9" height="15"><use href="#ch"/></svg></div>

<div class="t l" style="left:262px;top:3910px;font-size:16px">原発爆発</div>
<div class="tag" style="left:262px;top:3937px;width:40px;height:26px">図書</div>
<div class="t k" style="left:318px;top:3939px;font-size:16px">倉澤治雄 著</div>
<div class="t k" style="left:278px;top:3966px;font-size:16px">高文研　2013.7</div>
<div class="t l m" style="left:331px;top:3997px">もっと見る <svg style="display:inline;vertical-align:-2px" width="9" height="15"><use href="#ch"/></svg></div>

<div class="t l" style="left:459px;top:3910px;font-size:16px;line-height:25.300px">明治日本の植民地支配<br>: 北海道から朝鮮へ</div>
<div class="tag" style="left:459px;top:3963px;width:40px;height:26px">図書</div>
<div class="t k" style="left:514px;top:3965px;font-size:16px">井上勝生 著</div>
<div class="t k" style="left:473px;top:3992px;font-size:16px">岩波書店　2013.8</div>
<div class="t l m" style="left:527px;top:4023px">もっと見る <svg style="display:inline;vertical-align:-2px" width="9" height="15"><use href="#ch"/></svg></div>

<div class="t" style="left:66px;top:4139px;font-size:24px;line-height:34px">「東学党の乱 (1894)」に関連するテーマで探す</div>
<div class="t" style="left:66px;top:4176px;color:#888">テーマが似ている資料や、より細かいテーマを扱っている資料の一覧を表示できます。</div>
<div class="th" style="left:66px;top:4208px">日本--外国関係--朝鮮--<br>歴史--明治時代</div>
<div class="th" style="left:300px;top:4208px">日清戦争 (1894-1895)</div>
<div class="th" style="left:534px;top:4208px">東学党の乱 (1894)</div>
<div class="th" style="left:767px;top:4208px">東学の乱 (1894)</div>
<div class="th" style="left:1000px;top:4208px">日清戦争 (1894-95)</div>
<div class="th" style="left:66px;top:4300px;height:77px">甲午農民戦争 (1894)</div>
<div class="th" style="left:300px;top:4300px;height:77px">Tonghak Incident,<br>1894</div>
<div class="th" style="left:534px;top:4300px;height:77px">Sino-Japanese War,<br>1894-1895</div>

<!-- FOOTER -->
<div class="a" style="left:0;top:4473px;width:1284px;height:295px;background:#f2f2f2;border-top:1px solid #ddd"></div>
<svg class="a" style="left:66px;top:4498px;color:#111" width="39" height="40" viewBox="0 0 38 40" fill="none" stroke="#111" stroke-width="2.200"><path d="M5 5Q-2 20 5 35M10 2Q6 20 10 38M15 1Q13 20 15 39M19 0V40M24 1Q26 20 24 39M29 2Q33 20 29 38M34 5Q40 20 34 35"/></svg>
<div class="t" style="left:113px;top:4499px;font-size:18.800px;color:#333">国立国会図書館サーチ</div>
<div class="t" style="left:113px;top:4519px;font-size:13.500px;color:#777;letter-spacing:1.500px">NDL SEARCH</div>
<svg class="a" style="left:1071px;top:4509px" width="19" height="19" viewBox="0 0 19 19"><rect x=".5" y=".5" width="11" height="11" fill="#fff" stroke="#777"/><rect x="8" y="8" width="11" height="11" fill="#777"/><text x="13.500" y="17" font-size="8" text-anchor="middle" fill="#fff">A</text><text x="6" y="9" font-size="7" text-anchor="middle" fill="#777">文</text></svg>
<div class="t" style="right:66px;top:4509px;font-size:15px;color:#777">Language : English</div>
<div class="t k" style="left:66px;top:4557px;font-size:16px">資料にアクセスするための手段</div>
<div class="t l" style="left:66px;top:4585px">インターネットで資料を読む</div>
<div class="t l" style="left:66px;top:4616px">資料のコピーを取り寄せる</div>
<div class="t l" style="left:66px;top:4646px">図書館で資料を読む</div>
<div class="t g" style="left:66px;top:4692px">国立国会図書館ホームページ</div>
<div class="a" style="left:264px;top:4692px;width:1px;height:20px;background:#777"></div>
<div class="t g" style="left:282px;top:4692px">お問い合わせ</div>
<div class="t g" style="left:389px;top:4692px">お知らせ</div>
<div class="t g" style="left:468px;top:4692px">プライバシーポリシー</div>
<div class="t g" style="left:633px;top:4692px">サイトポリシー</div>
<div class="t k" style="right:66px;top:4690px;font-size:12px">© 2024- National Diet Library, Japan.</div>
<div class="a" style="left:1018px;top:4718px;width:87px;height:26px;background:#fff"></div>
<div class="t g" style="left:1021px;top:4721px;font-size:12px">画面番号</div>
<div class="t k" style="left:1078px;top:4720px;font-size:15px">104</div>

<!-- COOKIE -->
<div class="a" style="left:9px;top:3578px;width:538px;height:265px;background:#fff;border-radius:7px;box-shadow:0 1px 10px rgba(0,0,0,.22)"></div>
<div class="t m" style="left:34px;top:3606px;font-size:18px;color:#444">NDLサーチでのクッキーの使用</div>
<div class="t k" style="left:34px;top:3646px;line-height:22.400px;color:#222">当ウェブサイト（https://ndlsearch.ndl.go.jp/）は、図書館サービスとしてウ<br>ェブサイトを機能させるために必要なクッキー（Cookie）を使用していま<br>す。また、当ウェブサイトの利用状況を計測し、改善に役立てるためのアクセ<br>ス解析クッキーを設定することもありますが、このクッキーは、利用者が同意<br>した場合にのみ設定されます。同意はいつでも取り消すことができます。</div>
<div class="t k" style="left:34px;top:3775px">クッキーの使用について：</div>
<div class="t l m" style="left:41px;top:3801px">詳細を見る</div>
<div class="a c" style="left:235px;top:3795px;width:128px;height:32px;background:#0f72b0;border-radius:3px;color:#fff;line-height:32px">必要最小限</div>
<div class="a c" style="left:395px;top:3795px;width:128px;height:32px;background:#0f72b0;border-radius:3px;color:#fff;line-height:32px">全て同意</div>

<div class="a c" style="left:1208px;top:3776px;width:60px;height:60px;background:#0f72b0;border-radius:8px"><svg style="margin:26px auto 0" width="10" height="7" viewBox="0 0 10 7"><path d="M1 6l4-5 4 5" fill="none" stroke="#fff" stroke-width="1.500"/></svg></div>
</body></html>
